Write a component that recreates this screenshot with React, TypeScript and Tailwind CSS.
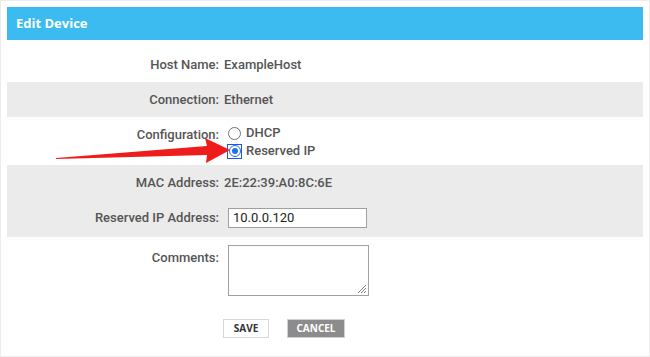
import React from "react";

const labelCls = "w-[216px] shrink-0 text-right pr-[4px]";

function Row({ gray, className, children }: { gray?: boolean; className?: string; children: React.ReactNode }) {
  return <div className={`flex ${gray ? "bg-[#ebebeb]" : "bg-white"} ${className ?? ""}`}>{children}</div>;
}

export default function App() {
  return (
    <div className="w-[650px] h-[357px] bg-white border border-[#ececec] p-[6px] relative overflow-hidden" style={{ fontFamily: "Roboto, 'Liberation Sans', sans-serif" }}>
      <div className="h-[33px] bg-[#3bbbf0] flex items-center pl-[9px]">
        <span className="text-white font-bold text-[13px]" style={{ fontFamily: "'Open Sans', 'Liberation Sans', sans-serif" }}>Edit Device</span>
      </div>
      <div className="text-[13px] font-medium text-[#555555]">
        <Row className="h-[42px] items-end pb-[8px]">
          <div className={labelCls}>Host Name:</div>
          <div className="pl-[1px]">ExampleHost</div>
        </Row>
        <Row gray className="h-[35px] items-center">
          <div className={labelCls}>Connection:</div>
          <div className="pl-[1px]">Ethernet</div>
        </Row>
        <Row className="h-[48px] pt-[8px]">
          <div className={labelCls}>Configuration:</div>
          <div className="flex flex-col gap-[2px] pl-[5px]">
            <label className="flex items-center gap-[5px] h-[16px]">
              <span className="w-[13px] h-[13px] rounded-full border-[1.5px] border-[#707070] bg-white" />
              <span>DHCP</span>
            </label>
            <label className="flex items-center gap-[5px] h-[16px]">
              <span className="w-[15px] h-[15px] -ml-[1px] -mr-[1px] border border-[#1f4fff] flex items-center justify-center">
                <span className="w-[12px] h-[12px] rounded-full border-[1.5px] border-[#1a73e8] bg-white flex items-center justify-center">
                  <span className="w-[6px] h-[6px] rounded-full bg-[#1a73e8]" />
                </span>
              </span>
              <span>Reserved IP</span>
            </label>
          </div>
        </Row>
        <Row gray className="h-[72px] flex-col">
          <div className="flex h-[36px] items-center">
            <div className={labelCls}>MAC Address:</div>
            <div className="pl-[1px]">2E:22:39:A0:8C:6E</div>
          </div>
          <div className="flex items-center mt-[7px]">
            <div className={labelCls}>Reserved IP Address:</div>
            <div className="ml-[5px] w-[139px] h-[20px] bg-white border border-[#a0a0a0] flex items-center pl-[4px] text-[#222] font-normal">10.0.0.120</div>
          </div>
        </Row>
        <Row className="h-[60px] pt-[8px]">
          <div className={`${labelCls} pt-[3px]`}>Comments:</div>
          <div className="ml-[5px] w-[141px] h-[51px] bg-white border border-[#a0a0a0] relative">
            <svg className="absolute right-[1px] bottom-[1px]" width="11" height="11" viewBox="0 0 11 11">
              <path d="M10 2 L2 10 M10 5 L5 10 M10 8 L8 10" stroke="#808080" strokeWidth="1" />
            </svg>
          </div>
        </Row>
        <div className="flex gap-[18px] pt-[22px] pl-[216px]" style={{ fontFamily: "'Open Sans', 'Liberation Sans', sans-serif" }}>
          <button className="w-[46px] h-[19px] bg-white border border-[#d8d8d8] text-[10px] font-bold text-[#333] flex items-center justify-center">SAVE</button>
          <button className="w-[58px] h-[19px] bg-[#8c8c8c] border border-[#d0d0d0] text-[10px] font-bold text-white flex items-center justify-center">CANCEL</button>
        </div>
      </div>
      <svg className="absolute left-0 top-0" width="650" height="357" viewBox="0 0 650 357">
        <polygon points="55,157 206,145 204,137 229,149 205,162 206,154 55,158" fill="#ef1c1c" />
      </svg>
    </div>
  );
}
